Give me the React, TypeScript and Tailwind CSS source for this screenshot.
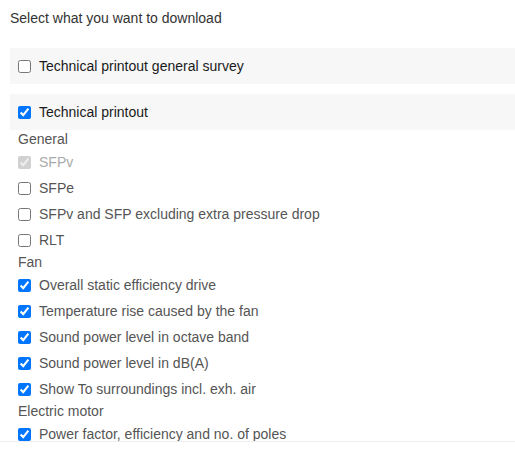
import type { ReactNode } from "react";

type Item = { label: string; checked?: boolean; disabled?: boolean };

const sections: { title: string; items: Item[] }[] = [
  {
    title: "General",
    items: [
      { label: "SFPv", checked: true, disabled: true },
      { label: "SFPe" },
      { label: "SFPv and SFP excluding extra pressure drop" },
      { label: "RLT" },
    ],
  },
  {
    title: "Fan",
    items: [
      { label: "Overall static efficiency drive", checked: true },
      { label: "Temperature rise caused by the fan", checked: true },
      { label: "Sound power level in octave band", checked: true },
      { label: "Sound power level in dB(A)", checked: true },
      { label: "Show To surroundings incl. exh. air", checked: true },
    ],
  },
  {
    title: "Electric motor",
    items: [{ label: "Power factor, efficiency and no. of poles", checked: true }],
  },
];

function Box({ checked, disabled }: { checked?: boolean; disabled?: boolean }) {
  return (
    <input
      type="checkbox"
      defaultChecked={checked}
      disabled={disabled}
      className="m-0 h-[13px] w-[13px] shrink-0"
    />
  );
}

function Group({ children }: { children: ReactNode }) {
  return (
    <div className="ml-[10px] flex h-[36px] items-center gap-[8px] bg-[#f7f7f7] pl-[8px] text-[14px] text-[#1a1a1a]">
      {children}
    </div>
  );
}

export default function App() {
  return (
    <div className="h-[465px] w-[515px] overflow-hidden bg-white font-['Liberation_Sans',sans-serif]">
      <div className="h-[442px] overflow-hidden border-b border-[#eeeeee]">
        <p className="pl-[10px] pt-[10px] text-[14px] leading-[17px] text-[#333]">
          Select what you want to download
        </p>

        <div className="mt-[21px] flex flex-col gap-[10px]">
          <Group>
            <Box />
            Technical printout general survey
          </Group>
          <Group>
            <Box checked />
            Technical printout
          </Group>
        </div>

        <div className="pl-[18px] text-[14px] text-[#555]">
          {sections.map((s) => (
            <div key={s.title}>
              <div className="flex h-[19px] items-center">{s.title}</div>
              {s.items.map((it) => (
                <label
                  key={it.label}
                  className={
                    "flex h-[26px] items-center gap-[8px] " +
                    (it.disabled ? "text-[#aaa]" : "")
                  }
                >
                  <Box checked={it.checked} disabled={it.disabled} />
                  {it.label}
                </label>
              ))}
            </div>
          ))}
        </div>
      </div>
    </div>
  );
}
